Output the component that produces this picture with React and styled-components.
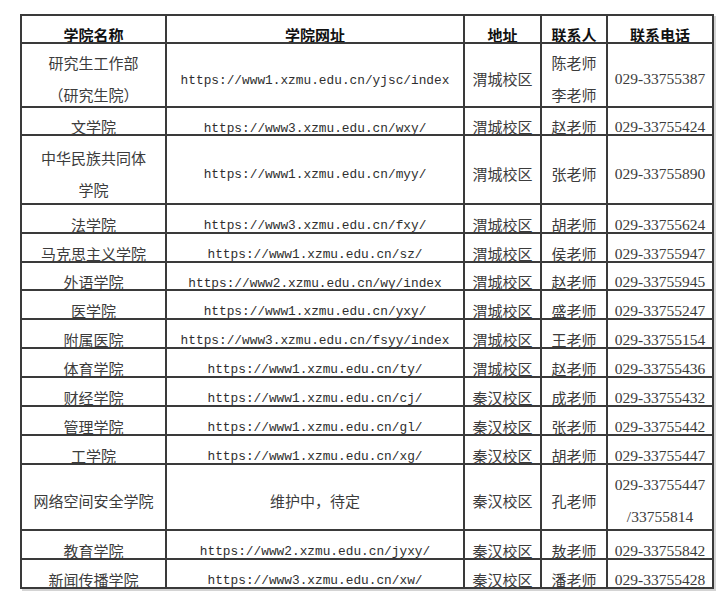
import React from 'react';
import styled, { createGlobalStyle } from 'styled-components';

const rows = [
  { name: ['研究生工作部', '（研究生院）'], url: 'https://www1.xzmu.edu.cn/yjsc/index', campus: '渭城校区', contact: ['陈老师', '李老师'], phone: ['029-33755387'], h: 64, tall: true },
  { name: ['文学院'], url: 'https://www3.xzmu.edu.cn/wxy/', campus: '渭城校区', contact: ['赵老师'], phone: ['029-33755424'], h: 28 },
  { name: ['中华民族共同体', '学院'], url: 'https://www1.xzmu.edu.cn/myy/', campus: '渭城校区', contact: ['张老师'], phone: ['029-33755890'], h: 69, tall: true },
  { name: ['法学院'], url: 'https://www3.xzmu.edu.cn/fxy/', campus: '渭城校区', contact: ['胡老师'], phone: ['029-33755624'], h: 29 },
  { name: ['马克思主义学院'], url: 'https://www1.xzmu.edu.cn/sz/', campus: '渭城校区', contact: ['侯老师'], phone: ['029-33755947'], h: 29 },
  { name: ['外语学院'], url: 'https://www2.xzmu.edu.cn/wy/index', campus: '渭城校区', contact: ['赵老师'], phone: ['029-33755945'], h: 28 },
  { name: ['医学院'], url: 'https://www1.xzmu.edu.cn/yxy/', campus: '渭城校区', contact: ['盛老师'], phone: ['029-33755247'], h: 29 },
  { name: ['附属医院'], url: 'https://www3.xzmu.edu.cn/fsyy/index', campus: '渭城校区', contact: ['王老师'], phone: ['029-33755154'], h: 29 },
  { name: ['体育学院'], url: 'https://www1.xzmu.edu.cn/ty/', campus: '渭城校区', contact: ['赵老师'], phone: ['029-33755436'], h: 29 },
  { name: ['财经学院'], url: 'https://www1.xzmu.edu.cn/cj/', campus: '秦汉校区', contact: ['成老师'], phone: ['029-33755432'], h: 29 },
  { name: ['管理学院'], url: 'https://www1.xzmu.edu.cn/gl/', campus: '秦汉校区', contact: ['张老师'], phone: ['029-33755442'], h: 29 },
  { name: ['工学院'], url: 'https://www1.xzmu.edu.cn/xg/', campus: '秦汉校区', contact: ['胡老师'], phone: ['029-33755447'], h: 29 },
  { name: ['网络空间安全学院'], url: null, campus: '秦汉校区', contact: ['孔老师'], phone: ['029-33755447', '/33755814'], h: 66, tall: true },
  { name: ['教育学院'], url: 'https://www2.xzmu.edu.cn/jyxy/', campus: '秦汉校区', contact: ['敖老师'], phone: ['029-33755842'], h: 29 },
  { name: ['新闻传播学院'], url: 'https://www3.xzmu.edu.cn/xw/', campus: '秦汉校区', contact: ['潘老师'], phone: ['029-33755428'], h: 29 },
];

const App = () => {
  return (
    <>
      <GlobalStyle />
      <Page>
        <Table>
          <Row $h={28}>
            <HeadCell>学院名称</HeadCell>
            <HeadCell>学院网址</HeadCell>
            <HeadCell>地址</HeadCell>
            <HeadCell>联系人</HeadCell>
            <HeadCell>联系电话</HeadCell>
          </Row>
          {rows.map((r, i) => (
            <Row key={i} $h={r.h}>
              <Cell $tall={r.tall}>
                {r.name.map((n) => (
                  <Line key={n}>{n}</Line>
                ))}
              </Cell>
              <Cell $tall={r.tall}>
                {r.url ? <Url>{r.url}</Url> : <Line>维护中，待定</Line>}
              </Cell>
              <Cell $tall={r.tall}>
                <Line>{r.campus}</Line>
              </Cell>
              <Cell $tall={r.tall}>
                {r.contact.map((c) => (
                  <Line key={c}>{c}</Line>
                ))}
              </Cell>
              <Cell $tall={r.tall}>
                {r.phone.map((p) => (
                  <Phone key={p}>{p}</Phone>
                ))}
              </Cell>
            </Row>
          ))}
        </Table>
      </Page>
    </>
  );
};

export default App;

//Styles

const GlobalStyle = createGlobalStyle`
  body {
    margin: 0;
    background: #ffffff;
    font-family: "Noto Sans CJK SC", "Noto Sans", sans-serif;
  }
`;

const Page = styled.div`
  padding: 14px 0 0 20px;
  width: 724px;
  height: 597px;
  box-sizing: border-box;
`;

const Table = styled.div`
  width: 694px;
  border-top: 2px solid #3a3a3a;
  border-left: 2px solid #3a3a3a;
  box-sizing: border-box;
  box-shadow: 2px 2px 0 #d4d4d4;
`;

const Row = styled.div`
  display: grid;
  grid-template-columns: 145px 298px 77px 66px 106px;
  height: ${(p) => p.$h}px;
`;

const Cell = styled.div`
  display: flex;
  flex-direction: column;
  align-items: center;
  justify-content: center;
  padding-top: ${(p) => (p.$tall ? 8 : 12)}px;
  border-right: 2px solid #3a3a3a;
  border-bottom: 2px solid #3a3a3a;
  box-sizing: border-box;
  overflow: hidden;
  white-space: nowrap;
  color: #3c3c3c;
  font-size: 15px;
  line-height: 32px;
`;

const HeadCell = styled(Cell)`
  padding-top: 12px;
  color: #111111;
  font-weight: 700;
`;

const Line = styled.div`
  height: 32px;
  flex-shrink: 0;
`;

const Url = styled(Line)`
  padding-top: 3px;
  font-family: "Liberation Mono", monospace;
  font-size: 12.8px;
  color: #2e2e2e;
`;

const Phone = styled(Line)`
  font-family: "Liberation Serif", serif;
  font-size: 15.5px;
`;
